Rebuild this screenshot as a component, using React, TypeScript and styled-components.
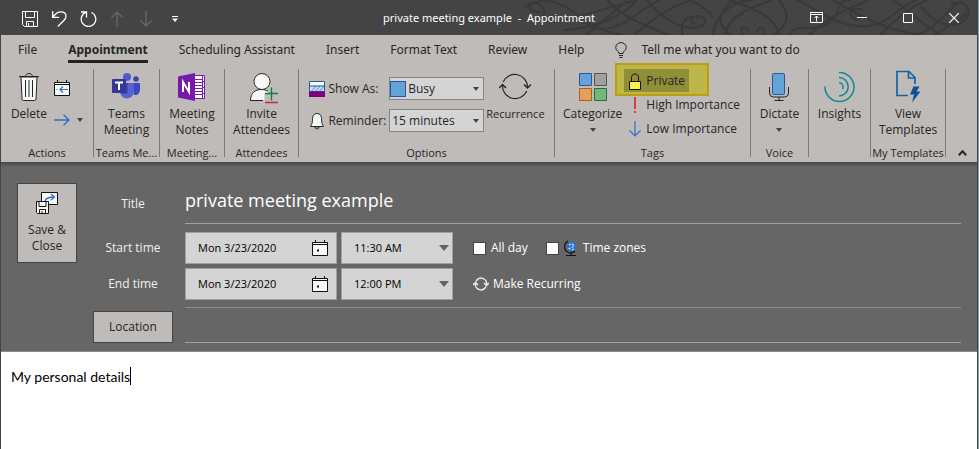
import React from "react";
import styled, { createGlobalStyle, css } from "styled-components";

const GlobalStyle = createGlobalStyle`
  *, *::before, *::after { box-sizing: border-box; }
  html, body, #root { height: 100%; }
  body { margin: 0; background: #8c979e; }
  body, button, input, select {
    font-family: "Open Sans", "Noto Sans", sans-serif;
    font-size: 12px;
    line-height: 16px;
    color: #262626;
  }
  button { border: 0; padding: 0; background: none; cursor: pointer; }
  svg { display: block; flex: none; }
`;

/* ---------- window frame ---------- */

const Window = styled.div`
  display: flex;
  flex-direction: column;
  min-height: 100%;
  margin-right: 1px;
  border-left: 1px solid #444;
  border-right: 1px solid #444;
  background: #fff;
`;

const TitleBar = styled.header`
  position: relative;
  display: grid;
  grid-template-columns: 1fr auto 1fr;
  align-items: center;
  height: 35px;
  overflow: hidden;
  background: #444;
  color: #fff;
`;

const Swirls = styled.svg`
  position: absolute;
  top: 0;
  right: 4px;
`;

const QuickAccess = styled.div`
  position: relative;
  display: flex;
  align-items: center;
  gap: 13px;
  padding: 2px 0 0 21px;
  button { display: grid; place-items: center; width: 16px; height: 20px; }
`;

const WindowTitle = styled.h1`
  position: relative;
  margin: 0;
  font-family: "Noto Sans", sans-serif;
  font-size: 11px;
  font-weight: 400;
  white-space: pre;
`;

const WindowControls = styled.div`
  position: relative;
  display: flex;
  justify-content: flex-end;
  button { display: grid; place-items: center; width: 46px; height: 34px; }
`;

/* ---------- tabs ---------- */

const TabRow = styled.nav`
  display: flex;
  align-items: flex-start;
  height: 31px;
  padding: 7px 0 0 17px;
  gap: 31px;
  background: #bfbbb8;
  button { font-family: "Noto Sans", sans-serif; }
`;

const Tab = styled.button<{ $active?: boolean }>`
  height: 21px;
  white-space: nowrap;
  padding-bottom: 3px;
  border-bottom: 3px solid transparent;
  ${(p) =>
    p.$active &&
    css`
      font-weight: 700;
      border-bottom-color: #262220;
    `}
`;

const TellMe = styled.button`
  display: flex;
  align-items: center;
  gap: 14px;
  white-space: nowrap;
`;

/* ---------- ribbon ---------- */

const Ribbon = styled.section`
  display: flex;
  height: 96px;
  padding-top: 3px;
  background: #bfbbb8;
`;

const Group = styled.div<{ $width: number }>`
  display: flex;
  flex: none;
  flex-direction: column;
  width: ${(p) => p.$width}px;
`;

const GroupBody = styled.div`
  display: flex;
  justify-content: center;
  height: 76px;
`;

const GroupName = styled.div`
  overflow: hidden;
  text-align: center;
  white-space: nowrap;
  font-size: 11px;
`;

const Separator = styled.div`
  flex: none;
  width: 1px;
  height: 88px;
  background: #7d7a78;
`;

const BigButton = styled.button`
  display: flex;
  flex: none;
  flex-direction: column;
  align-items: center;
  height: 70px;
  svg { margin-bottom: 1px; }
  svg + svg, svg:last-child:not(:first-child) { margin-top: 6px; }
`;

const RecurrenceButton = styled(BigButton)`
  margin: 0 10px 0 2px;
  font-size: 11px;
`;

const CategorizeButton = styled(BigButton)`
  margin-left: 8px;
`;

const IconColumn = styled.div`
  display: flex;
  flex-direction: column;
  gap: 16px;
  padding: 11px 0 0 7px;
  button { display: flex; align-items: center; gap: 7px; height: 16px; }
`;

const OptionFields = styled.div`
  display: grid;
  flex: 1;
  grid-template-columns: 16px 1fr 95px;
  grid-auto-rows: 23px;
  align-items: center;
  column-gap: 3px;
  row-gap: 9px;
  padding: 8px 0 0 11px;
  white-space: nowrap;
`;

const SelectBox = styled.span`
  display: flex;
  align-items: center;
  width: 100%;
  height: 23px;
  border: 1px solid #858585;
  background: #d4d4d4;
  svg:last-child { margin: 0 4px; }
`;

const BusySwatch = styled.span`
  width: 16px;
  height: 16px;
  flex: none;
  border: 1px solid #2b579a;
  background: #62a4d8;
`;

const PlainSelect = styled.select`
  flex: 1;
  min-width: 0;
  height: 100%;
  padding: 0 2px;
  appearance: none;
  border: 0;
  outline: 0;
  background: transparent;
`;

const TagList = styled.div`
  display: flex;
  flex: 1;
  flex-direction: column;
  align-items: flex-start;
  padding-left: 2px;
`;

const TagButton = styled.button<{ $marked?: boolean }>`
  position: relative;
  display: flex;
  align-items: center;
  gap: 5px;
  height: 24px;
  padding: 0 4px 0 5px;
  white-space: nowrap;
  svg, span { position: relative; }
  ${(p) =>
    p.$marked &&
    css`
      &::before {
        content: "";
        position: absolute;
        inset: -6px -20px -3px -9px;
        border: 2px solid #bd9d12;
        background: #bdb74a;
      }
      &::after {
        content: "";
        position: absolute;
        inset: 0 0 1px 0;
        background: #918e38;
      }
      svg, span { z-index: 1; }
    `}
`;

const CollapseButton = styled.button`
  align-self: flex-end;
  margin: 0 0 6px 12px;
`;

/* ---------- appointment form ---------- */

const Form = styled.form`
  display: flex;
  gap: 16px;
  padding: 21px 16px 8px;
  border-bottom: 1px solid #8a8a8a;
  background: linear-gradient(#464646, #666 5px);
`;

const RaisedButton = styled.button<{ $tall?: boolean }>`
  display: flex;
  flex: none;
  flex-direction: column;
  align-items: center;
  justify-content: center;
  align-self: ${(p) => (p.$tall ? "flex-start" : "end")};
  height: ${(p) => (p.$tall ? 80 : 32)}px;
  width: ${(p) => (p.$tall ? "60px" : "auto")};
  border: 1px solid #444;
  background: #bfbbb8;
  svg { margin-bottom: 8px; }
`;

const Rows = styled.div`
  flex: 1;
  min-width: 0;
  color: #fff;
`;

const FormRow = styled.div<{ $gap: number }>`
  display: grid;
  grid-template-columns: 80px 1fr;
  align-items: center;
  column-gap: 12px;
  margin-bottom: ${(p) => p.$gap}px;
  & > label { text-align: center; color: #f0f0f0; }
`;

const LineInput = styled.input<{ $title?: boolean }>`
  width: 100%;
  height: ${(p) => (p.$title ? 41 : 36)}px;
  padding: ${(p) => (p.$title ? "0 0 7px" : "0")};
  border: 0;
  border-top: ${(p) => (p.$title ? "0" : "1px solid #8a8a8a")};
  border-bottom: 1px solid #a0a0a0;
  outline: 0;
  background: transparent;
  color: #fff;
  font-size: ${(p) => (p.$title ? 18 : 12)}px;
`;

const TimeFields = styled.div`
  display: flex;
  align-items: center;
`;

const FieldBox = styled.span<{ $width: number }>`
  display: flex;
  align-items: center;
  width: ${(p) => p.$width}px;
  height: 32px;
  margin-right: 4px;
  padding-left: 12px;
  border: 1px solid #a0a0a0;
  background: #d4d4d4;
  button { margin-right: 8px; }
  svg:last-child { margin-right: 3px; }
  button > svg:last-child { margin-right: 0; }
  select { padding: 0; color: #000; font-size: 11px; }
`;

const DateInput = styled.input`
  flex: 1;
  min-width: 0;
  padding: 0;
  border: 0;
  outline: 0;
  background: transparent;
  color: #000;
  font-size: 11px;
`;

const CheckLabel = styled.label`
  display: flex;
  align-items: center;
  gap: 5px;
  margin-left: 16px;
  & + & { margin-left: 18px; }
`;

const Checkbox = styled.input`
  width: 13px;
  height: 13px;
  margin: 0;
  appearance: none;
  border: 1px solid #444;
  background: #fff;
  &:checked { background: #2b579a; }
`;

const RecurLink = styled.button`
  display: flex;
  align-items: center;
  gap: 4px;
  margin-left: 16px;
  color: #fff;
`;

const Body = styled.main`
  display: flex;
  flex: 1;
  align-items: flex-start;
  padding: 15px 10px;
  background: #fff;
`;

const Notes = styled.textarea`
  field-sizing: content;
  padding: 0;
  border: 0;
  outline: 0;
  resize: none;
  overflow: hidden;
  color: #000;
  font: 14px/20px Lato, "Open Sans", sans-serif;
`;

const Caret = styled.span`
  width: 1px;
  height: 18px;
  background: #000;
`;

/* ---------- icons ---------- */

const DropArrow = ({ w = 6, color = "#444" }: { w?: number; color?: string }) => (
  <svg width={w} height={w / 2 + 1} viewBox="0 0 6 4" preserveAspectRatio="none">
    <path d="M0 0h6L3 4z" fill={color} />
  </svg>
);

const SaveIcon = () => (
  <svg width="16" height="16" viewBox="0 0 16 16" fill="none" stroke="#fff">
    <path d="M.5.5h15v15H2.500L.5 13.500zM3.500.5v6h9v-6M4.500 15.500v-5h7v5M6.500 12v3.500" />
  </svg>
);

const UndoIcon = () => (
  <svg width="15" height="16" viewBox="0 0 15 16" fill="none" stroke="#fff" strokeWidth="1.300">
    <path d="M.7 0v6.300H7M1 6C3.500 2.500 6 .8 8.800.8c3 0 5.200 1.700 5.200 4.400 0 1.800-1 3.200-2.400 4.600L5.800 15.500" />
  </svg>
);

const RedoIcon = () => (
  <svg width="17" height="16" viewBox="0 0 17 16" fill="none" stroke="#fff" strokeWidth="1.300">
    <path d="M1 1h5.500v5.500M6.300 1.200A7.300 7.300 0 1 0 11.500 1.500" />
  </svg>
);

const VArrow = ({ down, color }: { down?: boolean; color: string }) => (
  <svg width="12" height="16" viewBox="0 0 12 16" fill="none" stroke={color} strokeWidth="1.200">
    <path d={down ? "M6 0v15M.5 9.500 6 15l5.500-5.500" : "M6 16V1M.5 6.500 6 1l5.500 5.500"} />
  </svg>
);

const TrashIcon = () => (
  <svg width="32" height="36" viewBox="0 0 32 36" fill="none" stroke="#262626">
    <path d="M8 8h16l-1 22q0 1.500-1.500 1.500h-11Q9 31.500 9 30z" fill="#f7f9f9" />
    <path d="M6 7.500h20M12.500 7.500c0-4 7-4 7 0M12.500 11v17M16 11v17M19.500 11v17" />
  </svg>
);

const CalendarBackIcon = () => (
  <svg width="16" height="16" viewBox="0 0 16 16" fill="none">
    <path d="M.5 2.500h15v13H.5zM.5 4.500h15M3.500 0v3M12.500 0v3" fill="#f7f9f9" stroke="#111" />
    <path d="M14 9.500H6M9 6.500l-3 3 3 3M2.500 9.500h1" stroke="#2f6fc4" strokeWidth="1.200" />
  </svg>
);

const ForwardIcon = () => (
  <svg width="16" height="12" viewBox="0 0 16 12" fill="none" stroke="#2f6fc4" strokeWidth="1.300">
    <path d="M0 6h15M9.500.7 15 6l-5.500 5.300" />
  </svg>
);

const TeamsIcon = () => (
  <svg width="32" height="36" viewBox="0 0 32 36">
    <circle cx="26" cy="10" r="2.800" fill="#3b45b0" />
    <circle cx="17" cy="8" r="4" fill="#5059c9" />
    <path d="M22 14h8v7a5 5 0 0 1-6 5z" fill="#3f48b8" />
    <path d="M10 14h14v8.500a7 7 0 0 1-14 0z" fill="#5661d4" />
    <path d="M15 14h2.500v10.500H12l-1.500-.5H15z" fill="#3a3f9e" />
    <rect x="2" y="10" width="14" height="14" rx="1" fill="#31389a" />
    <path d="M5 13.500h8M9 13.500V21" stroke="#fff" strokeWidth="2" />
  </svg>
);

const OneNoteIcon = () => (
  <svg width="32" height="36" viewBox="0 0 32 36">
    <path d="M15 6.500h13.500v23H15z" fill="#fff" stroke="#7719aa" />
    <path d="M18 10.500h8M18 13.500h8M18 16.500h8M18 19.500h8M18 22.500h8M18 25.500h8M26.500 6v24M26.500 12.500H29M26.500 18.500H29M26.500 24.500H29" stroke="#7719aa" />
    <path d="M2 7.500 19 4v28L2 28.500z" fill="#7719aa" />
    <path d="M7 23V13l6 10V13" fill="none" stroke="#fff" strokeWidth="2" />
  </svg>
);

const InviteIcon = () => (
  <svg width="32" height="36" viewBox="0 0 32 36" fill="none">
    <path d="M4.500 31.500c0-7.500 4.500-11 11-11 3 0 5 .8 6.500 2v2h-3.500v7z" fill="#f7f9f9" />
    <path d="M4.500 31.500c0-7.500 4.500-11 11-11 2.500 0 4.700.6 6.500 1.800M4.500 31.500H17" stroke="#262626" />
    <circle cx="16" cy="12.500" r="8" fill="#f7f9f9" stroke="#262626" />
    <path d="M25.500 18.500v13M19 24.500h13" stroke="#107c41" strokeWidth="1.300" />
    <path d="M19 33.500h13" stroke="#d0242b" strokeWidth="1.500" />
  </svg>
);

const ShowAsIcon = () => (
  <svg width="16" height="16" viewBox="0 0 16 16">
    <path d="M0 0h16v16H0z" fill="#f7f9f9" />
    <path d="M0 5h16v6H0z" fill="#cfe3f5" />
    <path d="m2 11 5-6M6 11l5-6M10 11l5-6" stroke="#7fb2e0" strokeWidth="1.500" />
    <path d="M.5.5h15v10H.5zM0 5h16" fill="none" stroke="#2b579a" />
    <path d="M0 10.500h16V16H0z" fill="#800080" />
  </svg>
);

const BellIcon = () => (
  <svg width="16" height="18" viewBox="0 0 16 18" fill="#f7f9f9" stroke="#262626">
    <path d="M6 15a2 2 0 0 0 4 0z" />
    <path d="M8 1.500c3 0 4.500 2.300 4.500 5 0 4 .5 6 2 7.500v.5h-13V14c1.500-1.500 2-3.500 2-7.500 0-2.700 1.500-5 4.500-5z" />
  </svg>
);

const RecurrenceIcon = () => (
  <svg width="32" height="36" viewBox="0 0 32 36" fill="none" stroke="#262626">
    <path d="M4.200 13A12.700 12.700 0 0 1 28.500 18.500M27.800 22A12.700 12.700 0 0 1 3.500 16" strokeWidth="1.200" />
    <path d="m25 15.500 3.500 3.500 3.500-3.500M0 19l3.500-3.500L7 19" strokeWidth="1.500" />
  </svg>
);

const CategorizeIcon = () => (
  <svg width="32" height="36" viewBox="0 0 32 36">
    <path d="M2.500 4.500h12v12h-12z" fill="#62a4d8" stroke="#2b579a" />
    <path d="M17.500 4.500h12v12h-12z" fill="#a0a0a0" stroke="#555" />
    <path d="M2.500 19.500h12v12h-12z" fill="#dfa25e" stroke="#c1570d" />
    <path d="M17.500 19.500h12v12h-12z" fill="#77b57a" stroke="#1e7140" />
  </svg>
);

const LockIcon = () => (
  <svg width="12" height="17" viewBox="0 0 12 17">
    <path d="M2.500 8V4.500C2.500 2.500 4 1 6 1s3.500 1.500 3.500 3.500V8" fill="none" stroke="#111" />
    <path d="M.5 8.500h11v8H.5z" fill="#f8f34a" stroke="#111" />
  </svg>
);

const ExclaimIcon = () => (
  <svg width="12" height="16" viewBox="0 0 12 16">
    <path d="M6 0v12M6 14v2" stroke="#d0403c" strokeWidth="2" />
  </svg>
);

const DictateIcon = () => (
  <svg width="32" height="36" viewBox="0 0 32 36" fill="none">
    <path d="M6.500 18v6q0 4 4 4h11q4 0 4-4v-6M16 28v3M11.500 31.500h9" stroke="#262626" />
    <rect x="9.500" y="4.500" width="12" height="21" rx="1" fill="#62a4d8" stroke="#2b579a" />
  </svg>
);

const InsightsIcon = () => (
  <svg width="32" height="36" viewBox="0 0 32 36" fill="none" stroke="#0f8a95" strokeWidth="1.500">
    <path d="M15 3.500a14.500 14.500 0 1 1-14 14M15 8.500a9.200 9.200 0 1 1 0 18.400M15 13.500a4.300 4.300 0 0 1 3.500 6.500" />
  </svg>
);

const TemplatesIcon = () => (
  <svg width="32" height="36" viewBox="0 0 32 36" fill="none" stroke="#1464a5" strokeWidth="1.700">
    <path d="M16 26.500H5v-24h12l6 6V15M16.500 3v6H23" />
    <path d="m21.500 17.500h6l-3 5h4l-8.500 11 2-8h-4z" fill="#0b5394" stroke="none" />
  </svg>
);

const SaveCloseIcon = () => (
  <svg width="22" height="22" viewBox="0 0 22 22" fill="none" stroke="#111">
    <path d="M5.500.5h16v12h-16z" fill="#f7f9f9" />
    <path d="M9 9c1-3 4-4 9-4M15 2l3.500 3L15 8" stroke="#2f6fc4" strokeWidth="1.300" />
    <path d="M.5 9.500h12v12h-11l-1-1z" fill="#f7f9f9" />
    <path d="M3 9.500v5h7v-5M3.500 21.500v-4h6v4M6 19v2" />
  </svg>
);

const CalendarIcon = () => (
  <svg width="16" height="17" viewBox="0 0 16 17" stroke="#111" fill="#f7f9f9">
    <path d="M.5 2.500h15v13H.5zM.5 4.500h15M3.500 0v3M12.500 0v3" />
    <path d="M5 9.500h2v2H5z" fill="#111" stroke="none" />
  </svg>
);

const GlobeIcon = () => (
  <svg width="14" height="16" viewBox="0 0 14 16" fill="none">
    <circle cx="7.500" cy="6.500" r="5" fill="#2f73c8" />
    <path d="m5 5 2-1M8 4l2 1.500M4.500 8l2 1M7.500 7.500l2-1M8 10l2-1" stroke="#cfe0f5" strokeWidth="1.200" />
    <path d="M4 1C-.5 4-.5 10 4 12.300c2.500 1 5 .7 7-1M7 13v2.500M2 15.500h10" stroke="#111" strokeWidth="1.200" />
  </svg>
);

const RecurSmallIcon = () => (
  <svg width="16" height="14" viewBox="0 0 16 14" fill="none" stroke="#eee" strokeWidth="1.500">
    <path d="M3 4.500a5.500 5.500 0 0 1 10.500 3M13 9.500A5.500 5.500 0 0 1 2.500 6.500M11 6l2.500 2.500L16 6M0 8l2.500-2.500L5 8" />
  </svg>
);

const BulbIcon = () => (
  <svg width="12" height="16" viewBox="0 0 12 16" fill="none" stroke="#262626">
    <path d="M4 11.500C4 9 .7 8.500.7 5.500A5.200 5.200 0 0 1 6 .6a5.200 5.200 0 0 1 5.300 4.900C11.300 8.500 8 9 8 11.500zM4 13.500h4M4.500 15.500h3" />
  </svg>
);

/* ---------- page ---------- */

export default function App() {
  return (
    <>
      <GlobalStyle />
      <Window>
        <TitleBar>
          <Swirls width="450" height="35" viewBox="0 0 450 35" fill="none" stroke="#393939" strokeWidth="2" aria-hidden="true">
            <path d="M18 12C0 12 4 2 20 1c30-1 40 30 80 34M2 8c10-14 30 6 12 10M30 22c30-6 55-14 80-21M40 30c34-2 60-14 74-30M62 35C82 20 96 8 104 0M52 12c14 20 34 24 62 2l22-14M84 0c14 16 34 24 62 35" />
            <path d="M112 34c20-16 32-26 56-34M124 0c14 18 30 26 44 28 18 0 18-12 6-12-8 0-8 8 0 8M160 35c-4-12 2-20 14-18M166 0c10 4 18 10 24 16" />
            <path d="M210 0c-14 12-18 24-2 35M206 0c26 8 48 18 50 35M250 0c-26 8-46 18-48 35M256 0c10 12 12 24-6 35M220 35c-6-10 6-10 6-2M240 35c4-10-6-10-6-2M190 35c2-20 20-35 40-35" />
            <path d="M266 35c10-14 20-2 36-10 18-8 8-26 26-25M274 0c20 8 30 22 60 26 30 4 40-20 60-26M286 35c20-20 44-28 60-35M310 0c24 14 50 30 88 35M340 10c-16-6-16 10-4 10M358 35c18-20 30-28 46-35M370 0c20 14 34 28 48 35" />
            <path d="M392 35c20-4 30-24 46-34M398 6c10 14 28 26 44 14 10-10-2-22-14-16M412 35c10-8 22-12 32-22" />
          </Swirls>
          <QuickAccess>
            <button aria-label="Save"><SaveIcon /></button>
            <button aria-label="Undo"><UndoIcon /></button>
            <button aria-label="Redo"><RedoIcon /></button>
            <button aria-label="Previous item"><VArrow color="#6b6b6b" /></button>
            <button aria-label="Next item"><VArrow down color="#6b6b6b" /></button>
            <button aria-label="Customize toolbar">
              <svg width="6" height="6" viewBox="0 0 6 6"><path d="M0 0h6v1H0zM0 2.500h6L3 6z" fill="#fff" /></svg>
            </button>
          </QuickAccess>
          <WindowTitle>{"private meeting example  -  Appointment"}</WindowTitle>
          <WindowControls>
            <button aria-label="Ribbon display options">
              <svg width="13" height="11" viewBox="0 0 13 11" fill="none" stroke="#fff">
                <path d="M.5.5h12v10H.5zM.5 2.500h12M6.500 9.500V4M4.500 6l2-2 2 2" />
              </svg>
            </button>
            <button aria-label="Minimize">
              <svg width="10" height="1" viewBox="0 0 10 1"><path d="M0 0h10v1H0z" fill="#fff" /></svg>
            </button>
            <button aria-label="Maximize">
              <svg width="10" height="10" viewBox="0 0 10 10"><path d="M.5.5h9v9h-9z" fill="none" stroke="#fff" /></svg>
            </button>
            <button aria-label="Close">
              <svg width="10" height="10" viewBox="0 0 10 10"><path d="m0 0 10 10M10 0 0 10" stroke="#fff" strokeWidth="1.200" /></svg>
            </button>
          </WindowControls>
        </TitleBar>

        <TabRow>
          <Tab>File</Tab>
          <Tab $active>Appointment</Tab>
          <Tab>Scheduling Assistant</Tab>
          <Tab>Insert</Tab>
          <Tab>Format Text</Tab>
          <Tab>Review</Tab>
          <Tab>Help</Tab>
          <TellMe><BulbIcon />Tell me what you want to do</TellMe>
        </TabRow>

        <Ribbon>
          <Group $width={92}>
            <GroupBody>
              <BigButton><TrashIcon />Delete</BigButton>
              <IconColumn>
                <button aria-label="Copy to my calendar"><CalendarBackIcon /></button>
                <button aria-label="Forward"><ForwardIcon /><DropArrow /></button>
              </IconColumn>
            </GroupBody>
            <GroupName>Actions</GroupName>
          </Group>
          <Separator />
          <Group $width={65}>
            <GroupBody><BigButton><TeamsIcon />Teams<br />Meeting</BigButton></GroupBody>
            <GroupName>Teams Me...</GroupName>
          </Group>
          <Separator />
          <Group $width={64}>
            <GroupBody><BigButton><OneNoteIcon />Meeting<br />Notes</BigButton></GroupBody>
            <GroupName>Meeting...</GroupName>
          </Group>
          <Separator />
          <Group $width={73}>
            <GroupBody><BigButton><InviteIcon />Invite<br />Attendees</BigButton></GroupBody>
            <GroupName>Attendees</GroupName>
          </Group>
          <Separator />
          <Group $width={255}>
            <GroupBody>
              <OptionFields>
                <ShowAsIcon />
                <label htmlFor="show-as">Show As:</label>
                <SelectBox>
                  <BusySwatch />
                  <PlainSelect id="show-as"><option>Busy</option></PlainSelect>
                  <DropArrow />
                </SelectBox>
                <BellIcon />
                <label htmlFor="reminder">Reminder:</label>
                <SelectBox>
                  <PlainSelect id="reminder"><option>15 minutes</option></PlainSelect>
                  <DropArrow />
                </SelectBox>
              </OptionFields>
              <RecurrenceButton><RecurrenceIcon />Recurrence</RecurrenceButton>
            </GroupBody>
            <GroupName>Options</GroupName>
          </Group>
          <Separator />
          <Group $width={195}>
            <GroupBody>
              <CategorizeButton><CategorizeIcon />Categorize<DropArrow /></CategorizeButton>
              <TagList>
                <TagButton $marked><LockIcon /><span>Private</span></TagButton>
                <TagButton><ExclaimIcon /><span>High Importance</span></TagButton>
                <TagButton><VArrow down color="#2f6fc4" /><span>Low Importance</span></TagButton>
              </TagList>
            </GroupBody>
            <GroupName>Tags</GroupName>
          </Group>
          <Separator />
          <Group $width={57}>
            <GroupBody><BigButton><DictateIcon />Dictate<DropArrow /></BigButton></GroupBody>
            <GroupName>Voice</GroupName>
          </Group>
          <Separator />
          <Group $width={61}>
            <GroupBody><BigButton><InsightsIcon />Insights</BigButton></GroupBody>
          </Group>
          <Separator />
          <Group $width={74}>
            <GroupBody><BigButton><TemplatesIcon />View<br />Templates</BigButton></GroupBody>
            <GroupName>My Templates</GroupName>
          </Group>
          <Separator />
          <CollapseButton aria-label="Collapse the ribbon">
            <svg width="9" height="6" viewBox="0 0 9 6"><path d="m.8 5.200 3.700-4 3.700 4" fill="none" stroke="#262626" strokeWidth="2" /></svg>
          </CollapseButton>
        </Ribbon>

        <Form onSubmit={(e) => e.preventDefault()}>
          <RaisedButton $tall type="submit"><SaveCloseIcon />Save &amp;<br />Close</RaisedButton>
          <Rows>
            <FormRow $gap={8}>
              <label htmlFor="title">Title</label>
              <LineInput $title id="title" defaultValue="private meeting example" />
            </FormRow>
            <FormRow $gap={4}>
              <label htmlFor="start-date">Start time</label>
              <TimeFields>
                <FieldBox $width={152}>
                  <DateInput id="start-date" defaultValue="Mon 3/23/2020" />
                  <button type="button" aria-label="Pick start date"><CalendarIcon /></button>
                </FieldBox>
                <FieldBox $width={112}>
                  <PlainSelect aria-label="Start hour"><option>11:30 AM</option></PlainSelect>
                  <DropArrow w={10} color="#666" />
                </FieldBox>
                <CheckLabel><Checkbox type="checkbox" />All day</CheckLabel>
                <CheckLabel><Checkbox type="checkbox" /><GlobeIcon />Time zones</CheckLabel>
              </TimeFields>
            </FormRow>
            <FormRow $gap={7}>
              <label htmlFor="end-date">End time</label>
              <TimeFields>
                <FieldBox $width={152}>
                  <DateInput id="end-date" defaultValue="Mon 3/23/2020" />
                  <button type="button" aria-label="Pick end date"><CalendarIcon /></button>
                </FieldBox>
                <FieldBox $width={112}>
                  <PlainSelect aria-label="End hour"><option>12:00 PM</option></PlainSelect>
                  <DropArrow w={10} color="#666" />
                </FieldBox>
                <RecurLink type="button"><RecurSmallIcon />Make Recurring</RecurLink>
              </TimeFields>
            </FormRow>
            <FormRow $gap={0}>
              <RaisedButton type="button">Location</RaisedButton>
              <LineInput aria-label="Location" />
            </FormRow>
          </Rows>
        </Form>

        <Body>
          <Notes aria-label="Notes" rows={1} defaultValue="My personal details" />
          <Caret />
        </Body>
      </Window>
    </>
  );
}
